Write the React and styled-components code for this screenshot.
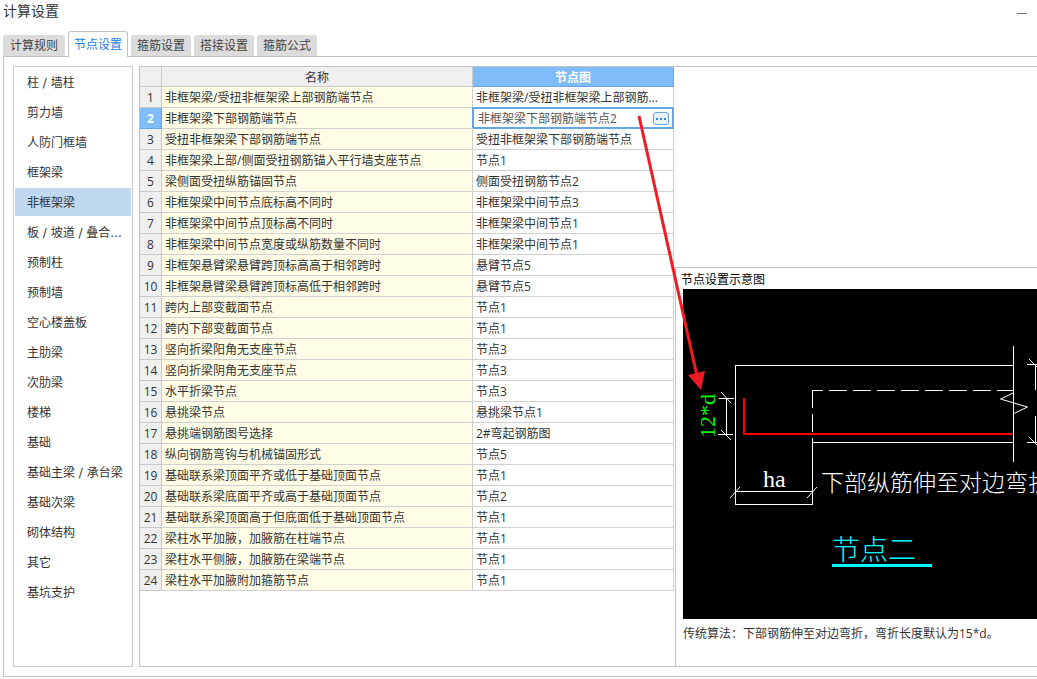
import React, { useState } from 'react';
import styled, { createGlobalStyle, css } from 'styled-components';

const tabs = ['计算规则', '节点设置', '箍筋设置', '搭接设置', '箍筋公式'];

const categories = [
  '柱 / 墙柱',
  '剪力墙',
  '人防门框墙',
  '框架梁',
  '非框架梁',
  '板 / 坡道 / 叠合...',
  '预制柱',
  '预制墙',
  '空心楼盖板',
  '主肋梁',
  '次肋梁',
  '楼梯',
  '基础',
  '基础主梁 / 承台梁',
  '基础次梁',
  '砌体结构',
  '其它',
  '基坑支护',
];

const rows = [
  ['非框架梁/受扭非框架梁上部钢筋端节点', '非框架梁/受扭非框架梁上部钢筋...'],
  ['非框架梁下部钢筋端节点', '非框架梁下部钢筋端节点2'],
  ['受扭非框架梁下部钢筋端节点', '受扭非框架梁下部钢筋端节点'],
  ['非框架梁上部/侧面受扭钢筋锚入平行墙支座节点', '节点1'],
  ['梁侧面受扭纵筋锚固节点', '侧面受扭钢筋节点2'],
  ['非框架梁中间节点底标高不同时', '非框架梁中间节点3'],
  ['非框架梁中间节点顶标高不同时', '非框架梁中间节点1'],
  ['非框架梁中间节点宽度或纵筋数量不同时', '非框架梁中间节点1'],
  ['非框架悬臂梁悬臂跨顶标高高于相邻跨时', '悬臂节点5'],
  ['非框架悬臂梁悬臂跨顶标高低于相邻跨时', '悬臂节点5'],
  ['跨内上部变截面节点', '节点1'],
  ['跨内下部变截面节点', '节点1'],
  ['竖向折梁阳角无支座节点', '节点3'],
  ['竖向折梁阴角无支座节点', '节点3'],
  ['水平折梁节点', '节点3'],
  ['悬挑梁节点', '悬挑梁节点1'],
  ['悬挑端钢筋图号选择', '2#弯起钢筋图'],
  ['纵向钢筋弯钩与机械锚固形式', '节点5'],
  ['基础联系梁顶面平齐或低于基础顶面节点', '节点1'],
  ['基础联系梁底面平齐或高于基础顶面节点', '节点2'],
  ['基础联系梁顶面高于但底面低于基础顶面节点', '节点1'],
  ['梁柱水平加腋，加腋筋在柱端节点', '节点1'],
  ['梁柱水平侧腋，加腋筋在梁端节点', '节点1'],
  ['梁柱水平加腋附加箍筋节点', '节点1'],
];

const NodeDiagram = () => (
  <Drawing role="img" aria-label="节点二">
    <g fill="none" stroke="#fff" shapeRendering="crispEdges">
      <path d="M129.5 215.5H52.5V76.5H330.5M330.5 57V173M129 153.5H330M129.5 153V215M52 202.5H129" />
      <path d="M129.5 101.5H330" strokeDasharray="18 6" strokeDashoffset="8" />
      <path d="M129.5 101V153" strokeDasharray="18 6" />
      <path d="M43.5 109V146M36 109.5H51M35 145.5H50" />
      <path d="M344 75.5H360M344 153.5H360M352.5 76V101M352.5 127V154" />
    </g>
    <g fill="none" stroke="#fff">
      <path d="M330 104L317.5 110L344.5 118L331 124.5" />
      <path d="M47 209L57 198M124 209L134 198" />
      <path d="M38 103L48 114M38 141L48 151M346 70L356 80M346 148L356 158" />
    </g>
    <path d="M61 109V145H330" fill="none" stroke="#f00" strokeWidth="2" />
    <DrawingText fill="#0f0" fontSize="22" transform="translate(32 149) rotate(-90)">12*d</DrawingText>
    <DrawingText x="80" y="198" fill="#fff" fontSize="24">ha</DrawingText>
    <DrawingText x="138" y="202" fill="#fff" fontSize="23">下部纵筋伸至对边弯折</DrawingText>
    <DrawingText x="149" y="271" fill="#0ff" fontSize="28">节点二</DrawingText>
    <path d="M149 276.5H249" stroke="#0ff" strokeWidth="3" />
  </Drawing>
);

const App = () => {
  const [tab, setTab] = useState('节点设置');
  const [category, setCategory] = useState('非框架梁');
  const [node, setNode] = useState('非框架梁下部钢筋端节点2');

  return (
    <>
      <GlobalStyle />
      <Window>
        <TitleBar>
          <Title>计算设置</Title>
          <Minimize type="button" aria-label="最小化" />
        </TitleBar>
        <TabBar role="tablist">
          {tabs.map((name) => (
            <Tab
              key={name}
              type="button"
              role="tab"
              aria-selected={name === tab}
              $active={name === tab}
              onClick={() => setTab(name)}
            >
              {name}
            </Tab>
          ))}
        </TabBar>
        <Frame>
          <Sidebar>
            {categories.map((name) => (
              <Category
                key={name}
                type="button"
                $active={name === category}
                onClick={() => setCategory(name)}
              >
                {name}
              </Category>
            ))}
          </Sidebar>
          <Panel>
            <TablePane>
              <Table>
                <colgroup>
                  <NumberCol />
                  <col />
                  <NodeCol />
                </colgroup>
                <thead>
                  <tr>
                    <HeadCell aria-label="序号" />
                    <HeadCell>名称</HeadCell>
                    <HeadCell $active>节点图</HeadCell>
                  </tr>
                </thead>
                <tbody>
                  {rows.map(([name, value], i) => (
                    <tr key={name}>
                      <NumberCell scope="row" $active={i === 1}>{i + 1}</NumberCell>
                      <NameCell>{name}</NameCell>
                      {i === 1 ? (
                        <EditCell>
                          <Editor>
                            <NodeInput
                              aria-label={name}
                              value={node}
                              onChange={(e) => setNode(e.target.value)}
                            />
                            <MoreButton type="button" aria-label="选择节点图">
                              <svg width="10" height="2" fill="#2f7fd6" aria-hidden="true">
                                <path d="M0 0h2v2H0zM4 0h2v2H4zM8 0h2v2H8z" />
                              </svg>
                            </MoreButton>
                          </Editor>
                        </EditCell>
                      ) : (
                        <Cell>{value}</Cell>
                      )}
                    </tr>
                  ))}
                </tbody>
              </Table>
            </TablePane>
            <PreviewPane>
              <Preview>
                <PreviewTitle>节点设置示意图</PreviewTitle>
                <PreviewBody>
                  <NodeDiagram />
                  <Description>传统算法：下部钢筋伸至对边弯折，弯折长度默认为15*d。</Description>
                </PreviewBody>
              </Preview>
            </PreviewPane>
          </Panel>
        </Frame>
        <Pointer aria-hidden="true">
          <path d="M639 116L697 376" stroke="#ed1c24" strokeWidth="3" />
          <path d="M688 375L705 371L701 390Z" fill="#ed1c24" />
        </Pointer>
      </Window>
    </>
  );
};

export default App;

const GlobalStyle = createGlobalStyle`
  * {
    box-sizing: border-box;
  }
  body {
    margin: 0;
    background: #fff;
    color: #333;
    font-family: 'Open Sans', 'Noto Sans CJK SC', sans-serif;
    font-size: 12px;
    line-height: 18px;
  }
  button,
  input {
    font: inherit;
    color: inherit;
    border: 0;
    padding: 0;
    background: none;
  }
`;

const Window = styled.div`
  position: relative;
  display: flex;
  flex-direction: column;
  min-height: 100vh;
  padding: 0 0 2px 3px;
  overflow: hidden;
`;

const TitleBar = styled.header`
  display: flex;
  justify-content: space-between;
  align-items: flex-start;
  height: 31px;
  padding-right: 10px;
`;

const Title = styled.h1`
  margin: 0;
  font-size: 14px;
  font-weight: 400;
  line-height: 22px;
`;

const Minimize = styled.button`
  width: 10px;
  height: 14px;
  border-bottom: 1px solid #707070;
`;

const TabBar = styled.div`
  display: flex;
  align-items: flex-end;
  gap: 3px;
`;

const Tab = styled.button`
  height: 21px;
  padding: 0 6px;
  border-radius: 3px 3px 0 0;
  background: #dcdcdc;
  color: #444;

  &:first-child {
    padding: 0 7px;
  }

  ${({ $active }) => $active && css`
    z-index: 1;
    height: 26px;
    margin-bottom: -1px;
    padding: 0 5px;
    border: 1px solid #c3c3c6;
    border-bottom: 0;
    background: #fff;
    color: #1e7be0;
  `}
`;

const Frame = styled.main`
  flex: 1;
  display: flex;
  gap: 6px;
  padding: 9px 0 9px 9px;
  border: 1px solid #c3c3c6;
  border-right: 0;
`;

const Sidebar = styled.nav`
  flex: 0 0 120px;
  display: flex;
  flex-direction: column;
  gap: 2px;
  padding: 1px;
  border: 1px solid #c8c8c8;
`;

const Category = styled.button`
  height: 28px;
  padding: 2px 0 0 12px;
  font-family: 'DejaVu Sans', 'Noto Sans CJK SC', sans-serif;
  text-align: left;
  white-space: nowrap;
  background: ${({ $active }) => ($active ? '#c1d8f1' : 'transparent')};
`;

const Panel = styled.section`
  flex: 1;
  display: flex;
  gap: 1px;
  min-width: 0;
  border: 1px solid #c3c3c6;
  border-right: 0;
`;

const TablePane = styled.div`
  flex: 0 1 534px;
`;

const Table = styled.table`
  width: 100%;
  table-layout: fixed;
  border-collapse: separate;
  border-spacing: 0;
`;

const NumberCol = styled.col`
  width: 22px;
`;

const NodeCol = styled.col`
  width: 201px;
`;

const activeHead = css`
  border-color: #68a5e8;
  background: #80bbfa;
  color: #fff;
  font-weight: 700;
`;

const HeadCell = styled.th`
  height: 20px;
  padding: 2px 0 0;
  border-right: 1px solid #c8c8c8;
  border-bottom: 1px solid #c8c8c8;
  background: #efefef;
  font-weight: 400;
  line-height: 17px;
  ${({ $active }) => $active && activeHead}
`;

const Cell = styled.td`
  height: 21px;
  padding: 2px 3px 0;
  border-right: 1px solid #d0d0d0;
  border-bottom: 1px solid #d0d0d0;
  overflow: hidden;
  white-space: nowrap;
`;

const NameCell = styled(Cell)`
  background: #fffde6;
`;

const NumberCell = styled.th`
  height: 21px;
  padding: 2px 0 0;
  border-right: 1px solid #c8c8c8;
  border-bottom: 1px solid #c8c8c8;
  background: #efefef;
  font-weight: 400;
  ${({ $active }) => $active && activeHead}
`;

const EditCell = styled.td`
  height: 21px;
  padding: 0;
`;

const Editor = styled.div`
  display: flex;
  align-items: center;
  height: 21px;
  padding: 0 5px;
  box-shadow: -1px -1px 0 #68a5e8, inset 1px 1px 0 #68a5e8, inset -2px -2px 0 #68a5e8;
`;

const NodeInput = styled.input`
  flex: 1;
  min-width: 0;
  height: 18px;
  color: #555;
  outline: 0;
`;

const MoreButton = styled.button`
  display: flex;
  justify-content: center;
  align-items: center;
  width: 16px;
  height: 13px;
  border: 1px solid #68a5e8;
  border-radius: 3px;
  background: #e8f2fd;
`;

const PreviewPane = styled.div`
  flex: 1;
  display: flex;
  flex-direction: column;
  justify-content: flex-end;
  min-width: 0;
`;

const Preview = styled.section`
  padding: 0 0 21px 5px;
  border-top: 1px solid #c3c3c6;
  border-left: 1px solid #c3c3c6;
`;

const PreviewTitle = styled.h2`
  margin: 0;
  padding-top: 3px;
  color: #000;
  font-size: 12px;
  font-weight: 400;
  line-height: 18px;
`;

const PreviewBody = styled.div`
  padding-left: 2px;
`;

const Drawing = styled.svg`
  display: block;
  width: 100%;
  height: 330px;
  background: #000;
`;

const DrawingText = styled.text`
  font-family: 'Liberation Serif', 'Noto Sans CJK SC', serif;
  font-weight: 300;
`;

const Description = styled.p`
  margin: 0;
  padding-top: 4px;
  line-height: 22px;
`;

// callout arrow from the edited cell to the 12*d dimension
const Pointer = styled.svg`
  position: absolute;
  top: 0;
  left: 0;
  z-index: 2;
  width: 100%;
  height: 100%;
  pointer-events: none;
`;
